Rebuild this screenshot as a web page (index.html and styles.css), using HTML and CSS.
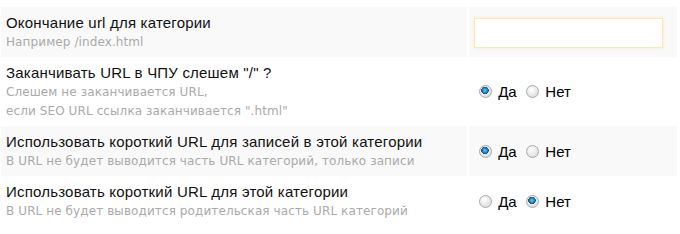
FILE: index.html
```html
<!DOCTYPE html>
<html lang="ru">
<head>
  <meta charset="UTF-8">
  <title>Настройки категории</title>
  <link rel="stylesheet" href="styles.css">
</head>
<body>

  <table class="options">
    <tr class="odd">
      <td class="label">
        <div class="title">Окончание url для категории</div>
        <div class="desc">Например /index.html</div>
      </td>
      <td class="field"><input type="text" class="text-input"></td>
    </tr>
    <tr>
      <td class="label">
        <div class="title">Заканчивать URL в ЧПУ слешем "/" ?</div>
        <div class="desc">Слешем не заканчивается URL,<br>если SEO URL ссылка заканчивается ".html"</div>
      </td>
      <td class="field">
        <label class="radio"><input type="radio" name="slash" checked> Да</label>
        <label class="radio"><input type="radio" name="slash"> Нет</label>
      </td>
    </tr>
    <tr class="odd">
      <td class="label">
        <div class="title">Использовать короткий URL для записей в этой категории</div>
        <div class="desc">В URL не будет выводится часть URL категорий, только записи</div>
      </td>
      <td class="field">
        <label class="radio"><input type="radio" name="short_rec" checked> Да</label>
        <label class="radio"><input type="radio" name="short_rec"> Нет</label>
      </td>
    </tr>
    <tr>
      <td class="label">
        <div class="title">Использовать короткий URL для этой категории</div>
        <div class="desc">В URL не будет выводится родительская часть URL категорий</div>
      </td>
      <td class="field">
        <label class="radio"><input type="radio" name="short_cat"> Да</label>
        <label class="radio"><input type="radio" name="short_cat" checked> Нет</label>
      </td>
    </tr>
  </table>

</body>
</html>
```

FILE: styles.css
```css
body {
  margin: 0;
  background: #fff;
  font-family: 'Liberation Sans', Arial, sans-serif;
  color: #111;
}

.options {
  margin-top: 7px;
  width: 100%;
  border-collapse: separate;
  border-spacing: 2px 0;
  margin-left: -1px;
}

.options td {
  padding: 6px 5px 5px;
  vertical-align: middle;
}

.options .label {
  width: 456px;
}

.odd td {
  background-color: #f9f9f9;
}

.title {
  font-size: 15px;
  letter-spacing: 0.2px;
  line-height: 20px;
  color: #111;
}

.desc {
  font-family: 'DejaVu Sans', Verdana, sans-serif;
  font-size: 12px;
  letter-spacing: 0.1px;
  line-height: 19px;
  color: #aaa;
}

.text-input {
  display: block;
  width: 189px;
  height: 30px;
  box-sizing: border-box;
  border: 1px solid #fde7b4;
  box-shadow: 0 0 3px rgba(253, 225, 160, 0.6);
  background: #fff;
  margin: 0;
  padding: 2px 4px;
}

.radio {
  font-size: 15px;
  color: #000;
}

.radio input {
  appearance: none;
  -webkit-appearance: none;
  width: 13px;
  height: 13px;
  margin: 0 2px 0 5px;
  vertical-align: -1px;
  border-radius: 50%;
  border: 1px solid #a9a9a9;
  background: radial-gradient(circle at 40% 35%, #fff 0%, #e8e8e8 55%, #cfcfcf 100%);
  box-sizing: border-box;
}

.radio input:checked {
  background:
    radial-gradient(circle at 45% 40%, #7ec3ee 0%, #1f7cc0 28%, #0b4f8c 40%, transparent 44%),
    radial-gradient(circle at 40% 35%, #fff 0%, #e8e8e8 55%, #cfcfcf 100%);
}
```
